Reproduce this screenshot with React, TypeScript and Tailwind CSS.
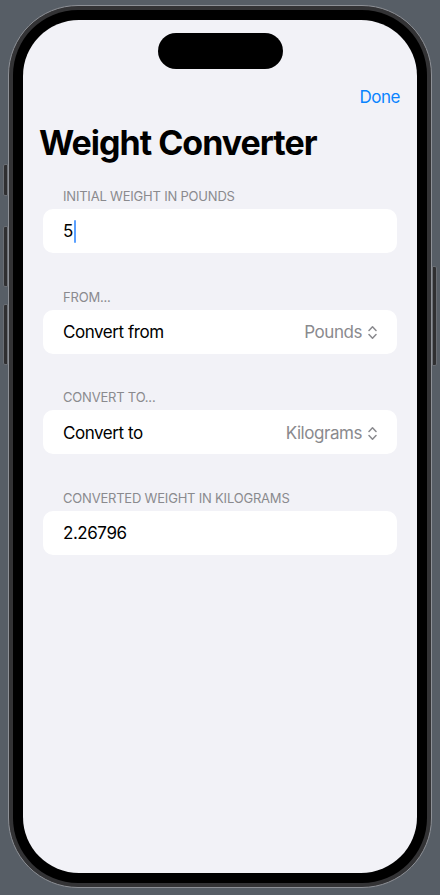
import React from "react";

function UpDown() {
  return (
    <svg width="9" height="15" viewBox="0 0 9 15" fill="none" className="ml-[6px]">
      <path d="M1 5.5 L4.5 1.8 L8 5.5" stroke="#8a8a8e" strokeWidth="1.5" strokeLinecap="round" strokeLinejoin="round" />
      <path d="M1 9.5 L4.5 13.2 L8 9.5" stroke="#8a8a8e" strokeWidth="1.5" strokeLinecap="round" strokeLinejoin="round" />
    </svg>
  );
}

function Header({ children }: { children: React.ReactNode }) {
  return (
    <div className="h-[22px] pl-[20px] text-[13px] leading-[18px] text-[#8a8a8e] tracking-[-0.2px]">
      {children}
    </div>
  );
}

function Card({ children }: { children: React.ReactNode }) {
  return (
    <div className="h-[44px] rounded-[10px] bg-white flex items-center px-[20px] pt-[2px] text-[17px] tracking-[-0.45px] text-black">
      {children}
    </div>
  );
}

export default function App() {
  return (
    <div
      className="relative w-[440px] h-[895px] bg-[#575e66] pl-[8px] pt-[5px] overflow-hidden"
      style={{ fontFamily: "Inter, 'Noto Sans', sans-serif" }}
    >
      {/* side buttons */}
      <div className="absolute left-[3px] top-[164px] w-[5px] h-[32px] rounded-l-[2px] bg-[#2f2f31] border border-[#6a6e74]" />
      <div className="absolute left-[3px] top-[226px] w-[5px] h-[61px] rounded-l-[2px] bg-[#2f2f31] border border-[#6a6e74]" />
      <div className="absolute left-[3px] top-[304px] w-[5px] h-[61px] rounded-l-[2px] bg-[#2f2f31] border border-[#6a6e74]" />
      <div className="absolute left-[432px] top-[266px] w-[5px] h-[100px] rounded-r-[2px] bg-[#2f2f31] border border-[#6a6e74]" />

      {/* phone frame */}
      <div className="w-[424px] h-[883px] rounded-[70px] bg-[#333335] border border-[#8d9096] p-[4px]">
        <div className="w-full h-full rounded-[65px] bg-black p-[10px]">
          <div className="w-full h-full rounded-[56px] bg-[#f2f2f7] flex flex-col pt-[13px] overflow-hidden">
            <div className="flex justify-center">
              <div className="w-[125px] h-[36px] rounded-full bg-black" />
            </div>
            <div className="mt-[17px] h-[22px] flex justify-end pr-[17px] text-[17px] leading-[22px] tracking-[-0.45px] text-[#0a84ff]">
              Done
            </div>
            <div className="mt-[14px] pl-[16px] h-[41px] text-[34px] leading-[41px] font-bold tracking-[-1px] text-black">
              Weight Converter
            </div>
            <div className="mt-[24px] px-[20px] flex flex-col gap-[34.7px]">
              <div>
                <Header>INITIAL WEIGHT IN POUNDS</Header>
                <Card>
                  <span>5</span>
                  <span className="w-[2px] h-[23px] bg-[#5aa0ff] rounded-full ml-[1px] -mt-[2px]" />
                </Card>
              </div>
              <div>
                <Header>FROM...</Header>
                <Card>
                  <span className="flex-1">Convert from</span>
                  <span className="text-[#8a8a8e]">Pounds</span>
                  <UpDown />
                </Card>
              </div>
              <div>
                <Header>CONVERT TO...</Header>
                <Card>
                  <span className="flex-1">Convert to</span>
                  <span className="text-[#8a8a8e]">Kilograms</span>
                  <UpDown />
                </Card>
              </div>
              <div>
                <Header>CONVERTED WEIGHT IN KILOGRAMS</Header>
                <Card>
                  <span>2.26796</span>
                </Card>
              </div>
            </div>
          </div>
        </div>
      </div>
    </div>
  );
}
